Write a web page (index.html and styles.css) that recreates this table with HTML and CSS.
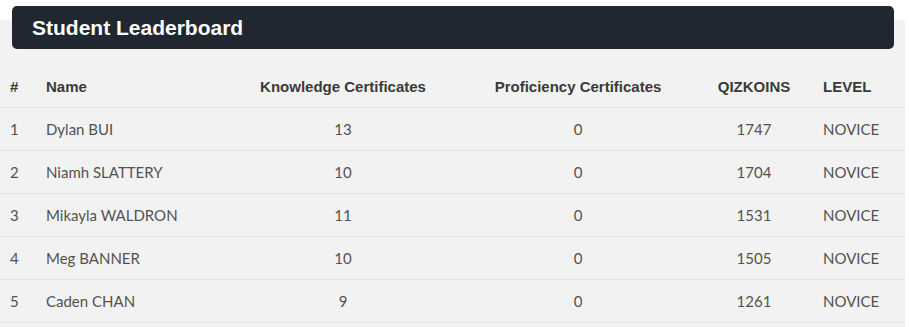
FILE: index.html
```html
<!DOCTYPE html>
<html>
<head>
<meta charset="utf-8">
<link rel="stylesheet" href="styles.css">
</head>
<body>
<div class="card">
  <div class="card-header"><h2 class="title">Student Leaderboard</h2></div>
  <table class="board">
    <colgroup>
      <col class="c-rank"><col class="c-name"><col class="c-know"><col class="c-prof"><col class="c-koin"><col class="c-level">
    </colgroup>
    <thead>
      <tr><th>#</th><th>Name</th><th class="center">Knowledge Certificates</th><th class="center">Proficiency Certificates</th><th class="center">QIZKOINS</th><th>LEVEL</th></tr>
    </thead>
    <tbody>
      <tr><td>1</td><td>Dylan BUI</td><td class="center">13</td><td class="center">0</td><td class="center">1747</td><td>NOVICE</td></tr>
      <tr><td>2</td><td>Niamh SLATTERY</td><td class="center">10</td><td class="center">0</td><td class="center">1704</td><td>NOVICE</td></tr>
      <tr><td>3</td><td>Mikayla WALDRON</td><td class="center">11</td><td class="center">0</td><td class="center">1531</td><td>NOVICE</td></tr>
      <tr><td>4</td><td>Meg BANNER</td><td class="center">10</td><td class="center">0</td><td class="center">1505</td><td>NOVICE</td></tr>
      <tr><td>5</td><td>Caden CHAN</td><td class="center">9</td><td class="center">0</td><td class="center">1261</td><td>NOVICE</td></tr>
    </tbody>
  </table>
</div>
</body>
</html>
```
FILE: styles.css
```css
html, body {
  margin: 0;
  padding: 0;
  background: #ffffff;
}
body {
  font-family: Lato, "Liberation Sans", sans-serif;
}
.card {
  margin-top: 20px;
  margin-right: 4px;
  background: #f2f2f2;
  padding-bottom: 10px;
}
.card-header {
  position: relative;
  top: -14px;
  margin: 0 11px 0 12px;
  height: 43px;
  background: #212731;
  border-radius: 5px;
  display: flex;
  align-items: center;
  padding-left: 20px;
}
.title {
  margin: 0;
  font-family: "Liberation Sans", Arial, sans-serif;
  font-weight: bold;
  font-size: 21px;
  color: #ffffff;
}
.board {
  width: 905px;
  border-collapse: collapse;
  table-layout: fixed;
  margin-top: 2px;
}
.c-rank { width: 36px; }
.c-name { width: 189px; }
.c-know { width: 236px; }
.c-prof { width: 234px; }
.c-koin { width: 118px; }
.c-level { width: 92px; }
.board th, .board td {
  height: 42px;
  padding: 0 10px;
  text-align: left;
  border-bottom: 1px solid #e3e3e3;
  white-space: nowrap;
}
.board th {
  font-family: "Liberation Sans", Arial, sans-serif;
  font-weight: bold;
  font-size: 15px;
  color: #3a3a3a;
}
.board td {
  font-size: 15px;
  color: #525252;
}
.board .center {
  text-align: center;
}
```
